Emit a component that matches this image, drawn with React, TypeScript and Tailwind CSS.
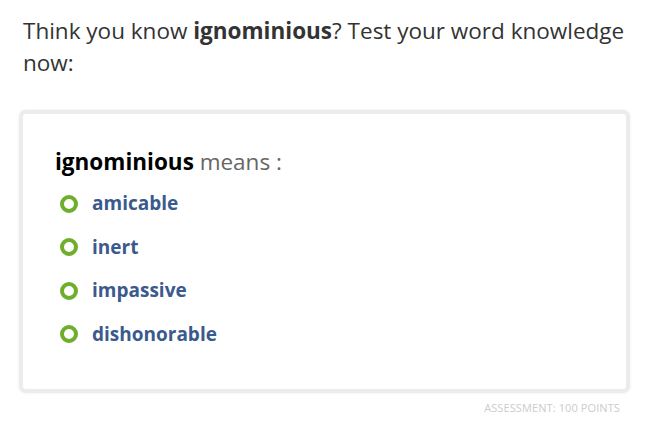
const OPTIONS = ["amicable", "inert", "impassive", "dishonorable"]

export default function App() {
  return (
    <div className="min-h-screen bg-white pl-[19px] pr-[37px] pt-[15px]" style={{ fontFamily: '"Open Sans", sans-serif' }}>
      <p className="ml-[4px] text-[22.5px] leading-[32px] text-[#333]">
        Think you know <b className="font-bold">ignominious</b>? Test your word knowledge now:
      </p>

      {/* quiz card */}
      <div className="mt-[31px] rounded-[7px] border-[4px] border-[#ececec] bg-white pb-[40px] pl-[32px] pt-[33px] shadow-[0_0_3px_rgba(0,0,0,0.08)]">
        <div className="text-[22.5px] leading-[30px] text-[#666]">
          <b className="font-bold text-black">ignominious</b> means :
        </div>
        <ul className="mt-[12px] flex flex-col gap-[14.5px]">
          {OPTIONS.map(o => (
            <li key={o} className="flex h-[29px] items-center">
              <span className="ml-[5px] h-[18px] w-[18px] shrink-0 rounded-full border-[4px] border-[#6eae2b]" />
              <span className="ml-[14px] text-[19px] font-bold leading-[29px] text-[#3a5a8e]">{o}</span>
            </li>
          ))}
        </ul>
      </div>

      <div className="mt-[7px] pr-[10px] text-right text-[11px] uppercase leading-[16px] tracking-[0.1px] text-[#cccccc]">
        Assessment: 100 points
      </div>
    </div>
  )
}
